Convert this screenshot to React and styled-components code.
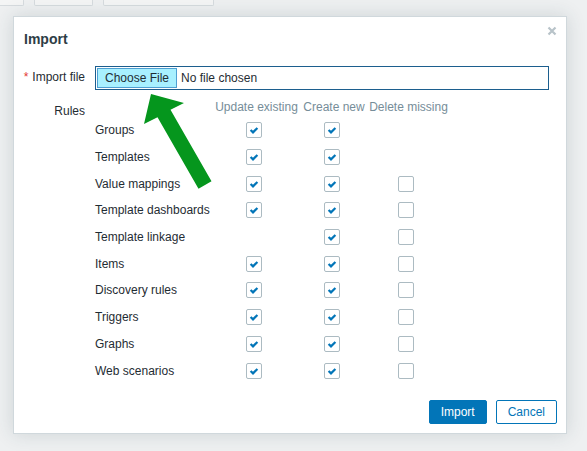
import React from "react";
import styled, { createGlobalStyle } from "styled-components";

const GlobalStyle = createGlobalStyle`
  html, body {
    margin: 0;
    padding: 0;
    background: #eef0f1;
    font-family: "Liberation Sans", Arial, sans-serif;
    font-size: 12px;
    color: #1f2c33;
  }
`;

const Page = styled.div`
  position: relative;
  width: 587px;
  height: 451px;
  overflow: hidden;
`;

const TopBar = styled.div`
  display: flex;
  gap: 10px;
  margin-left: -20px;
  height: 6px;
`;

const GhostButton = styled.div`
  width: ${(p) => p.w}px;
  height: 5px;
  border: 1px solid #d6dbde;
  border-top: none;
  border-radius: 0 0 2px 2px;
  background: #f4f5f5;
`;

const Dialog = styled.div`
  position: relative;
  box-sizing: border-box;
  margin: 10px 0 0 13px;
  width: 554px;
  height: 418px;
  background: #fff;
  border: 1px solid #d0d8dc;
  box-shadow: 0 0 18px rgba(40, 60, 75, 0.16);
  display: flex;
  flex-direction: column;
`;

const Header = styled.div`
  padding: 14px 10px 0;
`;

const Title = styled.h4`
  margin: 0;
  font-size: 14px;
  line-height: 16px;
  font-weight: bold;
  color: #2e3d46;
`;

const CloseButton = styled.button`
  position: absolute;
  top: 6px;
  right: 6px;
  width: 16px;
  height: 16px;
  padding: 0;
  border: none;
  background: transparent;
  display: flex;
  align-items: center;
  justify-content: center;
`;

const Form = styled.div`
  margin-top: 19px;
  display: grid;
  grid-template-columns: 71px 1fr;
  column-gap: 10px;
  row-gap: 10px;
  padding-right: 17px;
`;

const Label = styled.div`
  padding-top: 4px;
  line-height: 14px;
  text-align: right;
  white-space: nowrap;
  color: #1f2c33;
`;

const Required = styled.span`
  color: #e33734;
  margin-right: 4px;
`;

const FileInput = styled.div`
  box-sizing: border-box;
  height: 24px;
  border: 1px solid #1c5e8e;
  padding: 1px;
  display: flex;
  align-items: stretch;
  gap: 4px;
`;

const ChooseButton = styled.span`
  display: flex;
  align-items: center;
  padding: 0 7px;
  background: #a8f0ff;
  border: 1px solid #4f9fd2;
  color: #1f2c33;
  white-space: nowrap;
`;

const FileText = styled.span`
  display: flex;
  align-items: center;
  color: #1f2c33;
`;

const RulesTable = styled.div`
  display: grid;
  grid-template-columns: 117px 89px 66px 83px;
  grid-template-rows: 17px;
  grid-auto-rows: 26.7px;
`;

const HeadCell = styled.div`
  line-height: 14px;
  text-align: center;
  white-space: nowrap;
  color: #768d99;
`;

const NameCell = styled.div`
  display: flex;
  align-items: center;
  white-space: nowrap;
  color: #1f2c33;
`;

const BoxCell = styled.div`
  display: flex;
  align-items: center;
  justify-content: center;
`;

const Box = styled.span`
  box-sizing: border-box;
  width: 16px;
  height: 16px;
  margin-right: 5px;
  border: 1px solid #acbbc2;
  border-radius: 2px;
  background: #fff;
  display: flex;
  align-items: center;
  justify-content: center;
`;

const Footer = styled.div`
  margin-top: auto;
  display: flex;
  justify-content: flex-end;
  gap: 9px;
  padding: 0 9px 9px 0;
`;

const Button = styled.button`
  box-sizing: border-box;
  height: 24px;
  padding: 0 11px;
  font-family: "Liberation Sans", Arial, sans-serif;
  font-size: 12px;
  border-radius: 2px;
  border: 1px solid #0275b8;
  background: ${(p) => (p.$primary ? "#0275b8" : "#fff")};
  color: ${(p) => (p.$primary ? "#fff" : "#0275b8")};
`;

const Arrow = styled.svg`
  position: absolute;
  left: 0;
  top: 0;
  pointer-events: none;
`;

const rules = [
  ["Groups", true, true, null],
  ["Templates", true, true, null],
  ["Value mappings", true, true, false],
  ["Template dashboards", true, true, false],
  ["Template linkage", null, true, false],
  ["Items", true, true, false],
  ["Discovery rules", true, true, false],
  ["Triggers", true, true, false],
  ["Graphs", true, true, false],
  ["Web scenarios", true, true, false]
];

const Checkbox = ({ checked }) => (
  <Box>
    {checked && (
      <svg width="14" height="14" viewBox="0 0 14 14">
        <polyline
          points="3.6,7 6,9.4 10.4,5"
          fill="none"
          stroke="#0275b8"
          strokeWidth="2.2"
        />
      </svg>
    )}
  </Box>
);

const Cell = ({ value }) => (
  <BoxCell>{value !== null && <Checkbox checked={value} />}</BoxCell>
);

export default function App() {
  return (
    <Page>
      <GlobalStyle />
      <TopBar>
        <GhostButton w={42} />
        <GhostButton w={57} />
        <GhostButton w={109} />
      </TopBar>
      <Dialog>
        <Header>
          <Title>Import</Title>
        </Header>
        <CloseButton aria-label="Close">
          <svg width="10" height="10" viewBox="0 0 10 10">
            <path
              d="M1.5 1.5 L8.5 8.5 M8.5 1.5 L1.5 8.5"
              stroke="#b8c3c9"
              strokeWidth="2.2"
            />
          </svg>
        </CloseButton>
        <Form>
          <Label>
            <Required>*</Required>Import file
          </Label>
          <FileInput>
            <ChooseButton>Choose File</ChooseButton>
            <FileText>No file chosen</FileText>
          </FileInput>
          <Label>Rules</Label>
          <RulesTable>
            <div />
            <HeadCell>Update existing</HeadCell>
            <HeadCell>Create new</HeadCell>
            <HeadCell>Delete missing</HeadCell>
            {rules.map(([name, update, create, remove]) => (
              <React.Fragment key={name}>
                <NameCell>{name}</NameCell>
                <Cell value={update} />
                <Cell value={create} />
                <Cell value={remove} />
              </React.Fragment>
            ))}
          </RulesTable>
        </Form>
        <Footer>
          <Button $primary>Import</Button>
          <Button>Cancel</Button>
        </Footer>
      </Dialog>
      <Arrow width="587" height="451">
        <polygon
          points="151,94 184,103 170.5,109.7 211.5,181.2 198.5,188.8 157.5,117.3 144,124"
          fill="#05961d"
        />
      </Arrow>
    </Page>
  );
}
